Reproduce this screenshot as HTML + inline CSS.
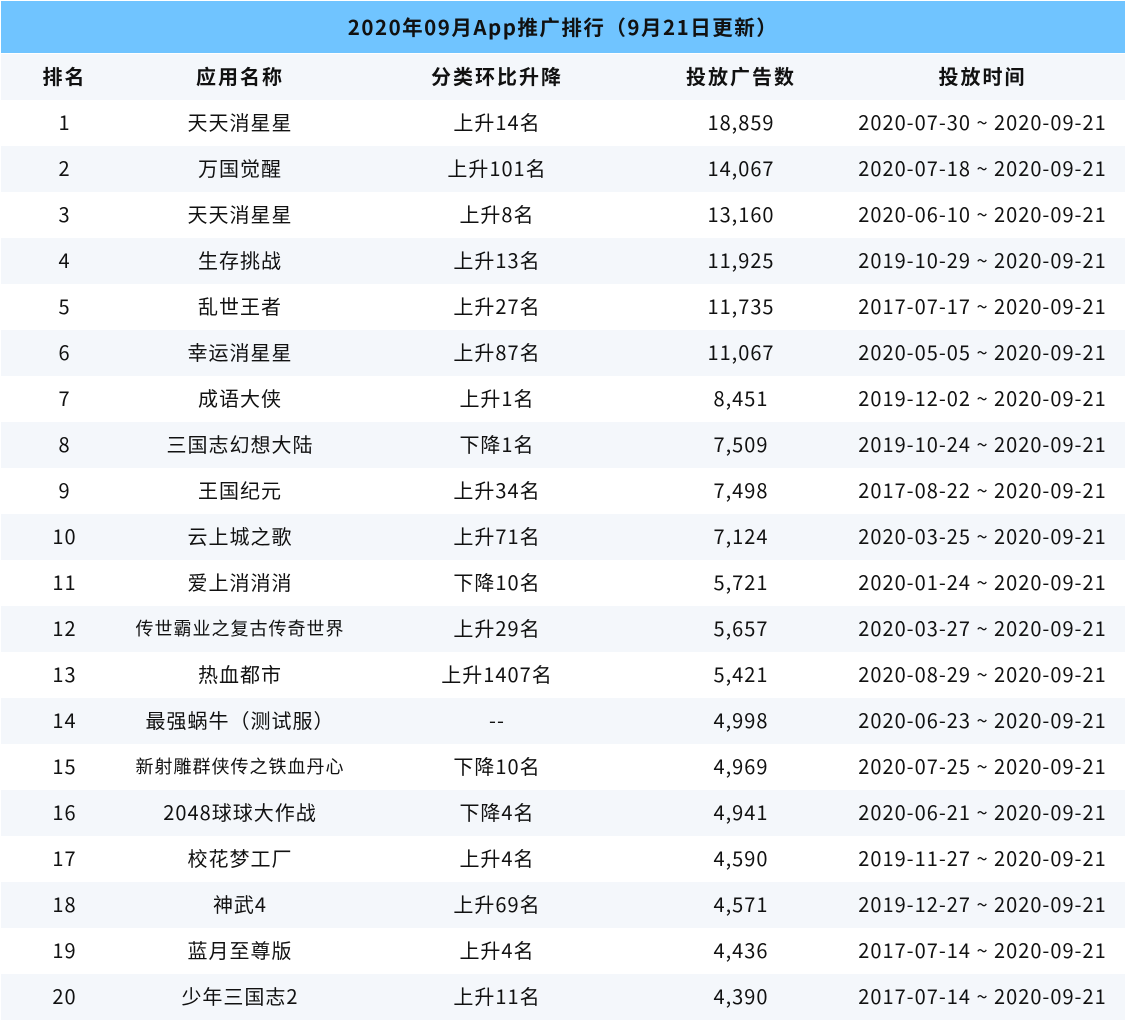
<!DOCTYPE html>
<html><head><meta charset="utf-8"><style>
html,body{margin:0;padding:0;background:#fff;}
body{width:1126px;height:1021px;overflow:hidden;font-family:"Noto Sans CJK SC","Liberation Sans",sans-serif;color:#111;}
.title{position:absolute;left:1px;top:1px;width:1124px;height:52px;background:#70c4ff;text-align:center;line-height:50px;font-size:20.5px;font-weight:bold;letter-spacing:1.5px;}
table{position:absolute;left:1px;top:54px;width:1124px;border-collapse:collapse;table-layout:fixed;}
td,th{height:43px;padding:0 0 3px 0;text-align:center;font-size:20px;white-space:nowrap;line-height:40px;letter-spacing:1px;}
th{font-weight:bold;letter-spacing:2px;}
tr:nth-child(odd){background:#f4f7fb;}
tr:nth-child(even){background:#fff;}
.s{font-size:18px;}
</style></head><body>
<div class="title">2020年09月App推广排行（9月21日更新）</div>
<table>
<colgroup><col style="width:127px"><col style="width:224px"><col style="width:290px"><col style="width:198px"><col style="width:285px"></colgroup>
<tr><th>排名</th><th>应用名称</th><th>分类环比升降</th><th>投放广告数</th><th>投放时间</th></tr>
<tr><td>1</td><td>天天消星星</td><td>上升14名</td><td>18,859</td><td>2020-07-30 ~ 2020-09-21</td></tr>
<tr><td>2</td><td>万国觉醒</td><td>上升101名</td><td>14,067</td><td>2020-07-18 ~ 2020-09-21</td></tr>
<tr><td>3</td><td>天天消星星</td><td>上升8名</td><td>13,160</td><td>2020-06-10 ~ 2020-09-21</td></tr>
<tr><td>4</td><td>生存挑战</td><td>上升13名</td><td>11,925</td><td>2019-10-29 ~ 2020-09-21</td></tr>
<tr><td>5</td><td>乱世王者</td><td>上升27名</td><td>11,735</td><td>2017-07-17 ~ 2020-09-21</td></tr>
<tr><td>6</td><td>幸运消星星</td><td>上升87名</td><td>11,067</td><td>2020-05-05 ~ 2020-09-21</td></tr>
<tr><td>7</td><td>成语大侠</td><td>上升1名</td><td>8,451</td><td>2019-12-02 ~ 2020-09-21</td></tr>
<tr><td>8</td><td>三国志幻想大陆</td><td>下降1名</td><td>7,509</td><td>2019-10-24 ~ 2020-09-21</td></tr>
<tr><td>9</td><td>王国纪元</td><td>上升34名</td><td>7,498</td><td>2017-08-22 ~ 2020-09-21</td></tr>
<tr><td>10</td><td>云上城之歌</td><td>上升71名</td><td>7,124</td><td>2020-03-25 ~ 2020-09-21</td></tr>
<tr><td>11</td><td>爱上消消消</td><td>下降10名</td><td>5,721</td><td>2020-01-24 ~ 2020-09-21</td></tr>
<tr><td>12</td><td class="s">传世霸业之复古传奇世界</td><td>上升29名</td><td>5,657</td><td>2020-03-27 ~ 2020-09-21</td></tr>
<tr><td>13</td><td>热血都市</td><td>上升1407名</td><td>5,421</td><td>2020-08-29 ~ 2020-09-21</td></tr>
<tr><td>14</td><td>最强蜗牛（测试服）</td><td>--</td><td>4,998</td><td>2020-06-23 ~ 2020-09-21</td></tr>
<tr><td>15</td><td class="s">新射雕群侠传之铁血丹心</td><td>下降10名</td><td>4,969</td><td>2020-07-25 ~ 2020-09-21</td></tr>
<tr><td>16</td><td>2048球球大作战</td><td>下降4名</td><td>4,941</td><td>2020-06-21 ~ 2020-09-21</td></tr>
<tr><td>17</td><td>校花梦工厂</td><td>上升4名</td><td>4,590</td><td>2019-11-27 ~ 2020-09-21</td></tr>
<tr><td>18</td><td>神武4</td><td>上升69名</td><td>4,571</td><td>2019-12-27 ~ 2020-09-21</td></tr>
<tr><td>19</td><td>蓝月至尊版</td><td>上升4名</td><td>4,436</td><td>2017-07-14 ~ 2020-09-21</td></tr>
<tr><td>20</td><td>少年三国志2</td><td>上升11名</td><td>4,390</td><td>2017-07-14 ~ 2020-09-21</td></tr>
</table>
</body></html>
